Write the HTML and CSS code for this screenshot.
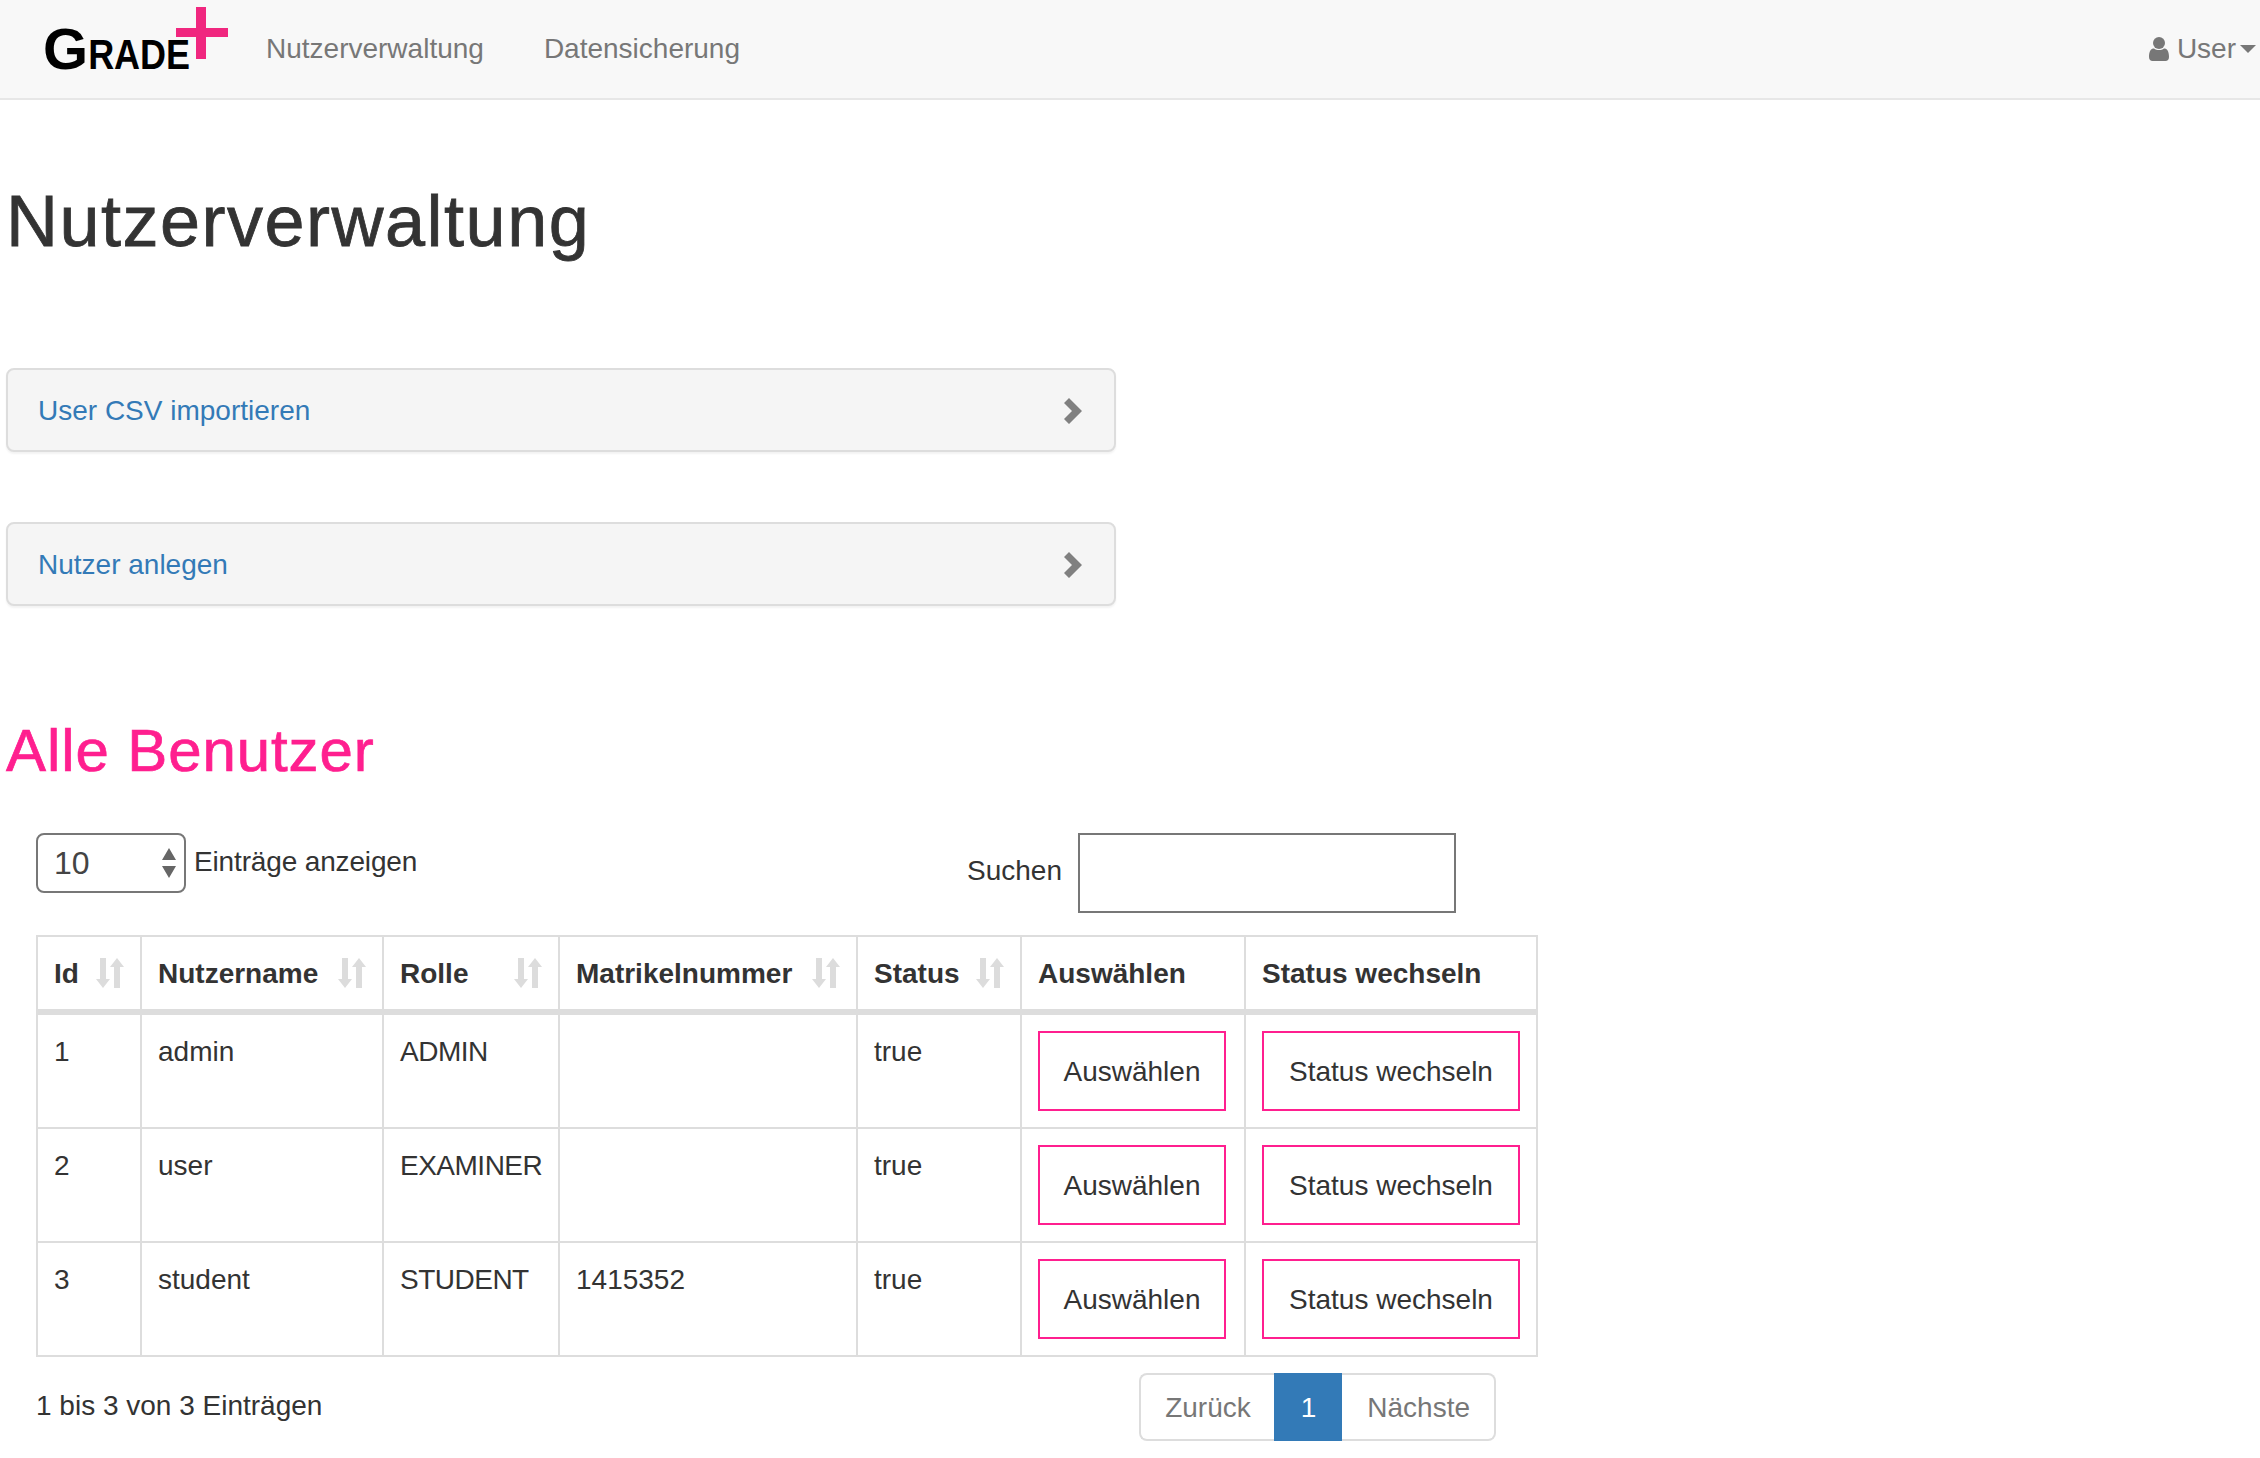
FILE: index.html
```html
<!doctype html>
<html lang="de">
<head>
	<meta charset="UTF-8">
	<title>Nutzerverwaltung</title>
	<link rel="stylesheet" href="styles.css">
</head>
<body>
	<nav class="navbar">
		<a class="logo" href="#">
			<span class="logo-g">G</span><span class="logo-rest">RADE</span>
			<svg class="logo-plus" width="52" height="52" viewBox="0 0 52 52"><path fill="#f0277f" d="M20 0h10v21h22v9H30v22H20V30H0v-9h20z"/></svg>
		</a>
		<a class="nav-link" href="#">Nutzerverwaltung</a>
		<a class="nav-link" href="#">Datensicherung</a>
		<a class="nav-user" href="#">
			<svg width="20" height="24" viewBox="0 0 20 24"><circle cx="10" cy="6" r="6" fill="#777"/><path fill="#777" d="M0 20c0-6 2-8.500 5-8.500 1.500 1 3 1.500 5 1.500s3.500-.5 5-1.500c3 0 5 2.500 5 8.500 0 2.500-1.500 4-3.500 4h-13C1.500 24 0 22.500 0 20z"/></svg>
			User<span class="caret"></span>
		</a>
	</nav>

	<main class="page">
		<h1>Nutzerverwaltung</h1>

		<div class="panel">
			<a href="#">User CSV importieren</a>
			<svg class="chevron" width="18" height="26" viewBox="0 0 18 26"><path fill="#808080" d="M5 0l13 13L5 26l-5-5 8-8-8-8z"/></svg>
		</div>
		<div class="panel">
			<a href="#">Nutzer anlegen</a>
			<svg class="chevron" width="18" height="26" viewBox="0 0 18 26"><path fill="#808080" d="M5 0l13 13L5 26l-5-5 8-8-8-8z"/></svg>
		</div>

		<h2>Alle Benutzer</h2>

		<div class="users">
			<div class="users-top">
				<div class="length">
					<div class="select">
						<span>10</span>
						<svg width="16" height="30" viewBox="0 0 16 30"><path fill="#666" d="M8 0l7 12H1zM1 18h14L8 30z"/></svg>
					</div>
					<span class="length-label">Einträge anzeigen</span>
				</div>
				<label class="search">Suchen <input type="text"></label>
			</div>

			<table>
				<thead>
					<tr>
						<th class="c-id"><div class="th-in">Id <svg class="sort" width="28" height="30" viewBox="0 0 28 30"><use href="#sort-icon"/></svg></div></th>
						<th class="c-name"><div class="th-in">Nutzername <svg class="sort" width="28" height="30" viewBox="0 0 28 30"><use href="#sort-icon"/></svg></div></th>
						<th class="c-role"><div class="th-in">Rolle <svg class="sort" width="28" height="30" viewBox="0 0 28 30"><use href="#sort-icon"/></svg></div></th>
						<th class="c-num"><div class="th-in">Matrikelnummer <svg class="sort" width="28" height="30" viewBox="0 0 28 30"><use href="#sort-icon"/></svg></div></th>
						<th class="c-status"><div class="th-in">Status <svg class="sort" width="28" height="30" viewBox="0 0 28 30"><use href="#sort-icon"/></svg></div></th>
						<th class="c-pick">Auswählen</th>
						<th class="c-switch">Status wechseln</th>
					</tr>
				</thead>
				<tbody>
					<tr>
						<td>1</td><td>admin</td><td class="role">ADMIN</td><td></td><td>true</td>
						<td><button class="btn-pick">Auswählen</button></td>
						<td><button>Status wechseln</button></td>
					</tr>
					<tr>
						<td>2</td><td>user</td><td class="role">EXAMINER</td><td></td><td>true</td>
						<td><button class="btn-pick">Auswählen</button></td>
						<td><button>Status wechseln</button></td>
					</tr>
					<tr>
						<td>3</td><td>student</td><td class="role">STUDENT</td><td>1415352</td><td>true</td>
						<td><button class="btn-pick">Auswählen</button></td>
						<td><button>Status wechseln</button></td>
					</tr>
				</tbody>
			</table>

			<div class="users-bottom">
				<span>1 bis 3 von 3 Einträgen</span>
				<ul class="pagination">
					<li><a href="#">Zurück</a></li>
					<li class="active"><a href="#">1</a></li>
					<li><a href="#">Nächste</a></li>
				</ul>
			</div>
		</div>
	</main>

	<svg width="0" height="0" class="defs">
		<defs>
			<g id="sort-icon" fill="#dcdcdc">
				<path d="M4 0h6v21h4l-7 9-7-9h4z"/>
				<path d="M21 0l7 9h-4v21h-6V9h-4z"/>
			</g>
		</defs>
	</svg>
</body>
</html>
```

FILE: styles.css
```css
*{
	box-sizing: border-box;
}
body{
	margin: 0;
	font-family: "Liberation Sans", Arial, sans-serif;
	font-size: 28px;
	line-height: 40px;
	color: #333;
	background-color: #fff;
}
a{
	text-decoration: none;
}
.defs{
	display: block;
	height: 0;
}

/* navbar */
.navbar{
	display: flex;
	align-items: center;
	height: 100px;
	padding-left: 43px;
	background-color: #f8f8f8;
	border-bottom: 2px solid #e7e7e7;
}
.logo{
	position: relative;
	display: block;
	width: 223px;
	height: 100px;
	padding-top: 24px;
	color: #000;
	font-weight: bold;
	line-height: 52px;
	white-space: nowrap;
}
.logo-g{
	font-size: 58px;
}
.logo-rest{
	display: inline-block;
	font-size: 36px;
	line-height: 40px;
	transform: scaleY(1.2);
	transform-origin: 0 31px;
}
.logo-plus{
	position: absolute;
	left: 133px;
	top: 8px;
}
.nav-link{
	color: #777;
	margin-right: 60px;
}
.nav-user{
	display: flex;
	align-items: center;
	gap: 8px;
	margin-left: auto;
	margin-right: 4px;
	color: #777;
}
.caret{
	width: 0;
	height: 0;
	margin-left: -4px;
	border-top: 8px solid #777;
	border-left: 8px solid transparent;
	border-right: 8px solid transparent;
}

/* page */
.page{
	padding: 0 6px;
}
h1{
	margin: 81px 0 0;
	font-size: 72px;
	font-weight: 500;
	line-height: 80px;
	letter-spacing: 1.5px;
	-webkit-text-stroke: .8px #333;
}
.panel{
	display: flex;
	align-items: center;
	justify-content: space-between;
	width: 1110px;
	height: 84px;
	margin-top: 107px;
	padding: 2px 32px 0 30px;
	background-color: #f5f5f5;
	border: 2px solid #ddd;
	border-radius: 8px;
	box-shadow: 0 2px 2px rgba(0,0,0,.05);
}
.panel + .panel{
	margin-top: 70px;
}
.panel a{
	color: #337ab7;
}
h2{
	margin: 112px 0 0;
	font-size: 60px;
	font-weight: 500;
	line-height: 66px;
	letter-spacing: .9px;
	color: #ff1f8f;
	-webkit-text-stroke: .7px #ff1f8f;
}

/* table area */
.users{
	width: 1502px;
	padding-left: 30px;
}
.users-top{
	display: flex;
	align-items: flex-start;
	justify-content: space-between;
	width: 1420px;
	margin-top: 49px;
}
.length{
	display: flex;
	gap: 8px;
}
.select{
	display: flex;
	align-items: center;
	justify-content: space-between;
	width: 150px;
	height: 60px;
	padding: 0 7px 0 16px;
	font-size: 32px;
	color: #444;
	border: 2px solid #777;
	border-radius: 8px;
}
.length-label{
	line-height: 58px;
	letter-spacing: -.15px;
}
.search{
	display: flex;
	align-items: flex-start;
	gap: 16px;
	line-height: 76px;
}
.search input{
	width: 378px;
	height: 80px;
	padding: 0 8px;
	font: inherit;
	background-color: #fff;
	border: 2px solid #777;
	border-radius: 0;
	outline: none;
}
table{
	width: 1502px;
	margin-top: 22px;
	border-collapse: collapse;
	table-layout: fixed;
}
th,td{
	padding: 16px;
	border: 2px solid #ddd;
	vertical-align: top;
	text-align: left;
}
td{
	line-height: 42px;
}
th{
	height: 74px;
	padding-top: 17px;
	padding-bottom: 15px;
	font-weight: bold;
	vertical-align: middle;
	border-bottom-width: 6px;
}
.th-in{
	display: flex;
	align-items: center;
	justify-content: space-between;
}
.sort{
	flex: none;
	margin-top: -2px;
}
.role{
	letter-spacing: -.5px;
}
.c-id{
	width: 104px;
}
.c-name{
	width: 242px;
}
.c-role{
	width: 176px;
}
.c-num{
	width: 298px;
}
.c-status{
	width: 164px;
}
.c-pick{
	width: 224px;
}
button{
	display: block;
	width: 100%;
	height: 80px;
	padding: 2px 0 0;
	font: inherit;
	color: #333;
	background-color: #fff;
	border: 2px solid #ff1f8f;
	border-radius: 0;
}
button.btn-pick{
	width: 188px;
}
.users-bottom{
	display: flex;
	align-items: flex-start;
	justify-content: space-between;
	width: 1460px;
	margin-top: 16px;
}
.users-bottom > span{
	line-height: 66px;
}
.pagination{
	display: flex;
	margin: 0;
	padding: 0;
	list-style-type: none;
}
.pagination a{
	display: block;
	height: 68px;
	padding: 0 24px;
	line-height: 66px;
	color: #777;
	background-color: #fff;
	border: 2px solid #ddd;
}
.pagination li:first-child a{
	padding-right: 23px;
	border-right: 0;
	border-radius: 8px 0 0 8px;
}
.pagination li:last-child a{
	padding-left: 25px;
	border-left: 0;
	border-radius: 0 8px 8px 0;
}
.pagination .active a{
	padding: 0 24px 0 25px;
	color: #fff;
	background-color: #337ab7;
	border-color: #337ab7;
}
```
